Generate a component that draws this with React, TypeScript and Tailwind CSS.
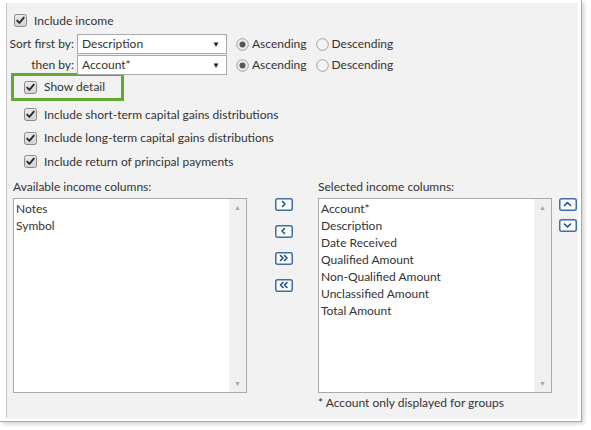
import React from "react";

const Check = () => (
  <svg width="13" height="13" viewBox="0 0 13 13" className="shrink-0">
    <defs>
      <linearGradient id="cg" x1="0" y1="0" x2="0" y2="1">
        <stop offset="0" stopColor="#ececec" />
        <stop offset="1" stopColor="#d2d2d2" />
      </linearGradient>
    </defs>
    <rect x="0.5" y="0.5" width="12" height="12" rx="2" fill="url(#cg)" stroke="#8a8a8a" />
    <path d="M3.2 6.6 L5.4 8.8 L9.8 3.6" fill="none" stroke="#2a2a2a" strokeWidth="1.9" strokeLinecap="round" strokeLinejoin="round" />
  </svg>
);

const Radio = ({ on }: { on?: boolean }) => (
  <svg width="13" height="13" viewBox="0 0 13 13" className="shrink-0">
    <circle cx="6.5" cy="6.5" r="5.8" fill={on ? "#ececec" : "#f4f4f4"} stroke="#a0a0a0" />
    {on && <circle cx="6.5" cy="6.5" r="3" fill="#555" />}
  </svg>
);

const Select = ({ value }: { value: string }) => (
  <div className="w-[150px] h-[20px] bg-white border border-[#a9a9a9] flex items-center pl-[4px] pr-[6px] justify-between">
    <span>{value}</span>
    <span className="text-[8px] text-[#222]">▼</span>
  </div>
);

const SortRow = ({ label, value }: { label: string; value: string }) => (
  <div className="flex items-center h-[20px]">
    <div className="w-[70px] text-right pr-[3px] whitespace-nowrap">{label}</div>
    <Select value={value} />
    <div className="flex items-center ml-[9px] gap-[3px]">
      <Radio on />
      <span>Ascending</span>
    </div>
    <div className="flex items-center ml-[9px] gap-[3px]">
      <Radio />
      <span>Descending</span>
    </div>
  </div>
);

const CheckRow = ({ text }: { text: string }) => (
  <div className="flex items-center h-[17px] gap-[7px] whitespace-nowrap">
    <Check />
    <span>{text}</span>
  </div>
);

const Chev = ({ kind }: { kind: "r" | "l" | "rr" | "ll" | "u" | "d" }) => {
  const s = { fill: "none", stroke: "#1f4f86", strokeWidth: 1.6, strokeLinecap: "round" as const, strokeLinejoin: "round" as const };
  let p: React.ReactNode = null;
  if (kind === "r") p = <path d="M7.5 3.5 L10 6 L7.5 8.5" {...s} />;
  if (kind === "l") p = <path d="M9.5 3.5 L7 6 L9.5 8.5" {...s} />;
  if (kind === "rr") p = <path d="M5.5 3.5 L8 6 L5.5 8.5 M9.5 3.5 L12 6 L9.5 8.5" {...s} />;
  if (kind === "ll") p = <path d="M8 3.5 L5.5 6 L8 8.5 M12 3.5 L9.5 6 L12 8.5" {...s} />;
  if (kind === "u") p = <path d="M5.5 7.5 L8.5 4.5 L11.5 7.5" {...s} />;
  if (kind === "d") p = <path d="M5.5 5 L8.5 8 L11.5 5" {...s} />;
  return (
    <svg width="18" height="13" viewBox="0 0 18 13" className="block">
      <rect x="0.75" y="0.75" width="16.5" height="11.5" rx="2" fill="#fbfbfb" stroke="#3d6fa6" strokeWidth="1.5" />
      {p}
    </svg>
  );
};

const ListBox = ({ items }: { items: string[] }) => (
  <div className="w-[234px] h-[195px] bg-white border border-[#a9a9a9] flex">
    <div className="flex-1 pl-[2px] pt-[1px] leading-[17px]">
      {items.map((t) => (
        <div key={t}>{t}</div>
      ))}
    </div>
    <div className="w-[17px] bg-[#f0f0f0] flex flex-col justify-between items-center py-[5px]">
      <span className="text-[7px] text-[#a6a6a6] leading-none">▲</span>
      <span className="text-[7px] text-[#a6a6a6] leading-none">▼</span>
    </div>
  </div>
);

export default function App() {
  return (
    <div
      className="w-[591px] h-[430px] bg-white text-[#333] text-[12px]"
      style={{ fontFamily: "Lato, 'Noto Sans', sans-serif" }}
    >
      <div className="w-[582px] h-[422px] border-r border-b border-[#a8a8a8] shadow-[2px_2px_4px_rgba(0,0,0,0.18)] pt-[3px] pb-[3px] pr-[3px] pl-[6px] flex">
        <div className="flex-1 bg-[#f2f2f2] border-l border-[#c6c6c6] pl-[7px] pt-[9px]">
          <CheckRow text="Include income" />
          <div className="mt-[5px] -ml-[7px] flex flex-col gap-[1px]">
            <SortRow label="Sort first by:" value="Description" />
            <SortRow label="then by:" value="Account*" />
          </div>
          <div className="-mt-[2px] -ml-[3px] w-[113px] h-[28px] border-[3px] border-[#63a832] flex items-center pl-[10px]">
            <CheckRow text="Show detail" />
          </div>
          <div className="pl-[10px] mt-[5px] flex flex-col gap-[6.5px]">
            <CheckRow text="Include short-term capital gains distributions" />
            <CheckRow text="Include long-term capital gains distributions" />
            <CheckRow text="Include return of principal payments" />
          </div>
          <div className="mt-[8px] -ml-[1px] flex">
            <div className="flex flex-col">
              <div className="h-[20px] leading-[18px]">Available income columns:</div>
              <ListBox items={["Notes", "Symbol"]} />
            </div>
            <div className="w-[72px] flex flex-col items-center pt-[20px] gap-[14px] pl-[1px]">
              <Chev kind="r" />
              <Chev kind="l" />
              <Chev kind="rr" />
              <Chev kind="ll" />
            </div>
            <div className="flex flex-col -ml-[1px]">
              <div className="h-[20px] leading-[18px]">Selected income columns:</div>
              <ListBox
                items={[
                  "Account*",
                  "Description",
                  "Date Received",
                  "Qualified Amount",
                  "Non-Qualified Amount",
                  "Unclassified Amount",
                  "Total Amount",
                ]}
              />
              <div className="mt-[1px] leading-[17px]">* Account only displayed for groups</div>
            </div>
            <div className="flex flex-col pt-[20px] pl-[7px] gap-[8px]">
              <Chev kind="u" />
              <Chev kind="d" />
            </div>
          </div>
        </div>
      </div>
    </div>
  );
}
